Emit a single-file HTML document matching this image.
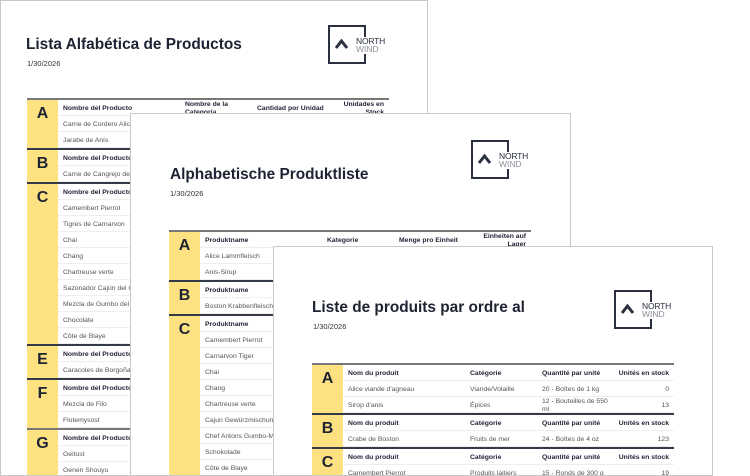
<!DOCTYPE html>
<html><head><meta charset="utf-8"><style>
*{margin:0;padding:0;box-sizing:border-box}
html,body{width:750px;height:476px;overflow:hidden}
body{background:#fff;font-family:"Liberation Sans",Arial,sans-serif;position:relative;color:#2b2f3a}
.pg{position:absolute;background:#fff;border:1px solid #c8c8c8;overflow:hidden}
.t{position:absolute;font-size:15.4px;font-weight:bold;color:#1e2333;white-space:nowrap}
.d{position:absolute;font-size:7.5px;color:#333}
.logo{position:absolute;width:39px;height:39px}
.logo .bx{position:absolute;left:0;top:0;width:38px;height:39px;border:2px solid #2a3040;border-right:none}
.logo .r1{position:absolute;left:36px;top:0;width:2px;height:12px;background:#2a3040}
.logo .r2{position:absolute;left:36px;top:29px;width:2px;height:10px;background:#2a3040}
.logo svg{position:absolute;left:7px;top:13px}
.logo .n{position:absolute;left:28px;top:12px;font-size:8.5px;color:#2a3040;line-height:9px;letter-spacing:-0.2px}
.logo .w{position:absolute;left:28px;top:20px;font-size:8.5px;color:#8a8f99;line-height:9px}
.tb{position:absolute;width:362px;border-top:2px solid #777}
.g{display:flex;border-top:2px solid #343a48}
.g:first-child{border-top:none}
.L{width:31px;background:#fee181;font-size:16px;font-weight:bold;color:#1e2333;text-align:center;padding-top:5px}
.rs{flex:1}
.r{height:16px;border-bottom:1px solid #eee;font-size:6.8px;position:relative;color:#555;white-space:nowrap}
.r span{position:absolute;top:5px}
.h{color:#1e2333;font-weight:bold}
.c1{left:5px}.c2{left:127px}.c3{left:199px}.c4{right:5px;text-align:right}
.two{top:1px!important;line-height:7.5px}
</style></head><body>

<!-- page 1 -->
<div class="pg" style="left:0;top:0;width:428px;height:476px">
<div class="t" style="left:25px;top:35px">Lista Alfabética de Productos</div>
<div class="d" style="left:26px;top:58px">1/30/2026</div>
<div class="logo" style="left:327px;top:24px"><div class="bx"></div><div class="r1"></div><div class="r2"></div>
<svg width="13" height="11" viewBox="0 0 13 11"><path d="M1 10 L6.5 3 L12 10" fill="none" stroke="#2a3040" stroke-width="3"/></svg>
<div class="n">NORTH</div><div class="w">WIND</div></div>
<div class="tb" style="left:26px;top:97px">
<div class="g"><div class="L">A</div><div class="rs">
<div class="r h"><span class="c1">Nombre del Producto</span><span class="c2 two">Nombre de la<br>Categoría</span><span class="c3">Cantidad por Unidad</span><span class="c4 two">Unidades en<br>Stock</span></div>
<div class="r"><span class="c1">Carne de Cordero Alice</span></div>
<div class="r"><span class="c1">Jarabe de Anís</span></div></div></div>
<div class="g"><div class="L">B</div><div class="rs">
<div class="r h"><span class="c1">Nombre del Producto</span></div>
<div class="r"><span class="c1">Carne de Cangrejo de Boston</span></div></div></div>
<div class="g"><div class="L">C</div><div class="rs">
<div class="r h"><span class="c1">Nombre del Producto</span></div>
<div class="r"><span class="c1">Camembert Pierrot</span></div>
<div class="r"><span class="c1">Tigres de Carnarvon</span></div>
<div class="r"><span class="c1">Chai</span></div>
<div class="r"><span class="c1">Chang</span></div>
<div class="r"><span class="c1">Chartreuse verte</span></div>
<div class="r"><span class="c1">Sazonador Cajún del Chef</span></div>
<div class="r"><span class="c1">Mezcla de Gumbo del Chef</span></div>
<div class="r"><span class="c1">Chocolate</span></div>
<div class="r"><span class="c1">Côte de Blaye</span></div></div></div>
<div class="g"><div class="L">E</div><div class="rs">
<div class="r h"><span class="c1">Nombre del Producto</span></div>
<div class="r"><span class="c1">Caracoles de Borgoña</span></div></div></div>
<div class="g"><div class="L">F</div><div class="rs">
<div class="r h"><span class="c1">Nombre del Producto</span></div>
<div class="r"><span class="c1">Mezcla de Filo</span></div>
<div class="r"><span class="c1">Flotemysost</span></div></div></div>
<div class="g" style="border-top-color:#777"><div class="L">G</div><div class="rs">
<div class="r h"><span class="c1">Nombre del Producto</span></div>
<div class="r"><span class="c1">Geitost</span></div>
<div class="r"><span class="c1">Genen Shouyu</span></div></div></div>
</div></div>

<!-- page 2 -->
<div class="pg" style="left:130px;top:113px;width:441px;height:363px">
<div class="t" style="left:39px;top:52px">Alphabetische Produktliste</div>
<div class="d" style="left:39px;top:75px">1/30/2026</div>
<div class="logo" style="left:340px;top:26px"><div class="bx"></div><div class="r1"></div><div class="r2"></div>
<svg width="13" height="11" viewBox="0 0 13 11"><path d="M1 10 L6.5 3 L12 10" fill="none" stroke="#2a3040" stroke-width="3"/></svg>
<div class="n">NORTH</div><div class="w">WIND</div></div>
<div class="tb" style="left:38px;top:116px">
<div class="g"><div class="L">A</div><div class="rs">
<div class="r h"><span class="c1">Produktname</span><span class="c2">Kategorie</span><span class="c3">Menge pro Einheit</span><span class="c4 two">Einheiten auf<br>Lager</span></div>
<div class="r"><span class="c1">Alice Lammfleisch</span></div>
<div class="r"><span class="c1">Anis-Sirup</span></div></div></div>
<div class="g"><div class="L">B</div><div class="rs">
<div class="r h"><span class="c1">Produktname</span></div>
<div class="r"><span class="c1">Boston Krabbenfleisch</span></div></div></div>
<div class="g"><div class="L">C</div><div class="rs">
<div class="r h"><span class="c1">Produktname</span></div>
<div class="r"><span class="c1">Camembert Pierrot</span></div>
<div class="r"><span class="c1">Carnarvon Tiger</span></div>
<div class="r"><span class="c1">Chai</span></div>
<div class="r"><span class="c1">Chang</span></div>
<div class="r"><span class="c1">Chartreuse verte</span></div>
<div class="r"><span class="c1">Cajun Gewürzmischung</span></div>
<div class="r"><span class="c1">Chef Antons Gumbo-Mischung</span></div>
<div class="r"><span class="c1">Schokolade</span></div>
<div class="r"><span class="c1">Côte de Blaye</span></div></div></div>
</div></div>

<!-- page 3 -->
<div class="pg" style="left:273px;top:246px;width:440px;height:230px">
<div class="t" style="left:38px;top:52px">Liste de produits par ordre al</div>
<div class="d" style="left:39px;top:75px">1/30/2026</div>
<div class="logo" style="left:340px;top:43px"><div class="bx"></div><div class="r1"></div><div class="r2"></div>
<svg width="13" height="11" viewBox="0 0 13 11"><path d="M1 10 L6.5 3 L12 10" fill="none" stroke="#2a3040" stroke-width="3"/></svg>
<div class="n">NORTH</div><div class="w">WIND</div></div>
<div class="tb" style="left:38px;top:116px">
<div class="g"><div class="L">A</div><div class="rs">
<div class="r h"><span class="c1">Nom du produit</span><span class="c2">Catégorie</span><span class="c3">Quantité par unité</span><span class="c4">Unités en stock</span></div>
<div class="r"><span class="c1">Alice viande d'agneau</span><span class="c2">Viande/Volaille</span><span class="c3">20 - Boîtes de 1 kg</span><span class="c4">0</span></div>
<div class="r"><span class="c1">Sirop d'anis</span><span class="c2">Épices</span><span class="c3 two">12 - Bouteilles de 550<br>ml</span><span class="c4">13</span></div></div></div>
<div class="g"><div class="L">B</div><div class="rs">
<div class="r h"><span class="c1">Nom du produit</span><span class="c2">Catégorie</span><span class="c3">Quantité par unité</span><span class="c4">Unités en stock</span></div>
<div class="r"><span class="c1">Crabe de Boston</span><span class="c2">Fruits de mer</span><span class="c3">24 - Boîtes de 4 oz</span><span class="c4">123</span></div></div></div>
<div class="g"><div class="L">C</div><div class="rs">
<div class="r h"><span class="c1">Nom du produit</span><span class="c2">Catégorie</span><span class="c3">Quantité par unité</span><span class="c4">Unités en stock</span></div>
<div class="r"><span class="c1">Camembert Pierrot</span><span class="c2">Produits laitiers</span><span class="c3">15 - Ronds de 300 g</span><span class="c4">19</span></div></div></div>
</div></div>
</body></html>
